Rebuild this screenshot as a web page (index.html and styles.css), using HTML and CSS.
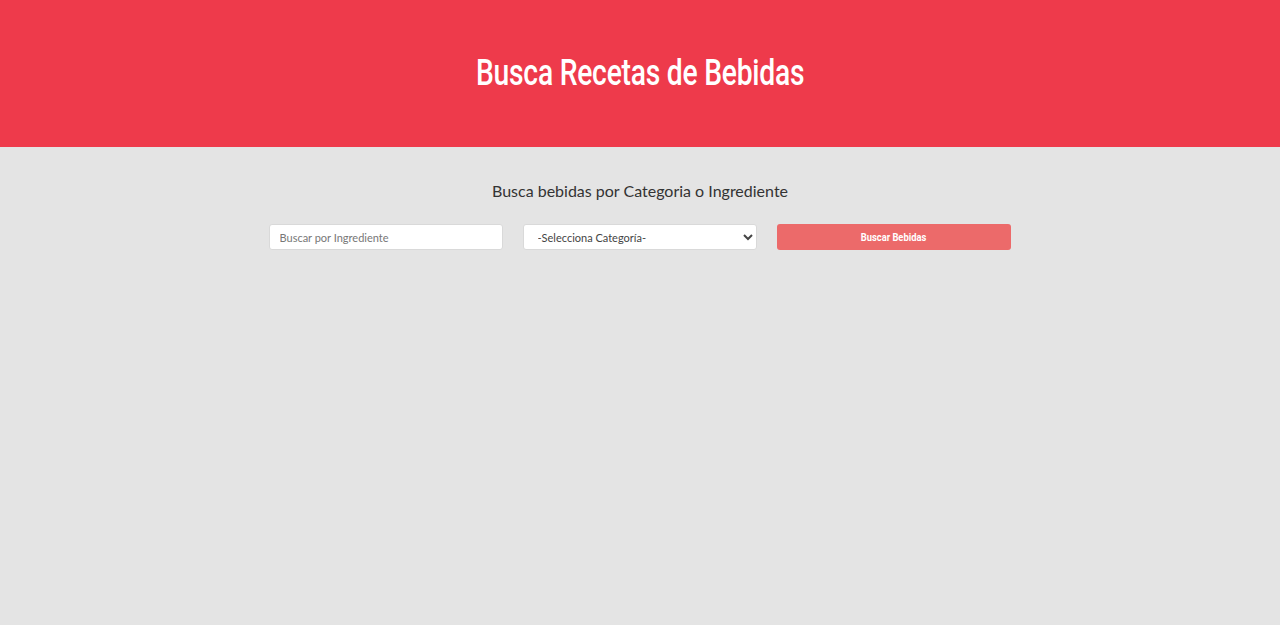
FILE: index.html
```html
<!DOCTYPE html>
<html lang="es">
<head>
<meta charset="utf-8">
<title>Busca Recetas de Bebidas</title>
<link rel="stylesheet" href="styles.css">
</head>
<body>
<header class="site-header">
  <h1 class="site-title">Busca Recetas de Bebidas</h1>
</header>
<main class="content">
  <h2 class="subtitle">Busca bebidas por Categoria o Ingrediente</h2>
  <form class="search-form">
    <input class="field" type="text" placeholder="Buscar por Ingrediente">
    <select class="field select">
      <option>-Selecciona Categoría-</option>
    </select>
    <button class="btn" type="button"><span class="btn-label">Buscar Bebidas</span></button>
  </form>
</main>
</body>
</html>
```
FILE: styles.css
```css
html, body {
  margin: 0;
  padding: 0;
}
body {
  background: #e4e4e4;
  font-family: Lato, "Open Sans", sans-serif;
  min-height: 625px;
}
.site-header {
  background: #ee3a4b;
  height: 147px;
  display: flex;
  align-items: center;
  justify-content: center;
}
.site-title {
  display: inline-block;
  margin: 0;
  color: #fff;
  font-family: Roboto, sans-serif;
  font-weight: 500;
  font-size: 36px;
  letter-spacing: -0.3px;
  padding-bottom: 2px;
  transform: scaleX(0.785);
}
.content {
  padding-top: 29px;
}
.subtitle {
  margin: 0;
  text-align: center;
  font-weight: normal;
  font-size: 16px;
  color: #333;
  line-height: 30px;
}
.search-form {
  display: flex;
  justify-content: center;
  gap: 20px;
  margin-top: 18px;
  padding-right: 1px;
}
.field {
  box-sizing: border-box;
  width: 234px;
  height: 26px;
  border: 1px solid #d9d9d9;
  border-radius: 3px;
  background: #fff;
  font-family: Lato, sans-serif;
  font-size: 11px;
  color: #555;
  padding: 0 10px;
  margin: 0;
}
.field::placeholder {
  color: #777;
}
.select {
  padding: 0 8px 0 10px;
  color: #444;
}
.btn {
  box-sizing: border-box;
  width: 234px;
  height: 26px;
  border: none;
  border-radius: 3px;
  background: #ec6a6a;
  color: #fff;
  font-family: Roboto, sans-serif;
  font-weight: bold;
  font-size: 11px;
  margin: 0;
}
.btn-label {
  display: inline-block;
  transform: scaleX(0.85);
}
```
